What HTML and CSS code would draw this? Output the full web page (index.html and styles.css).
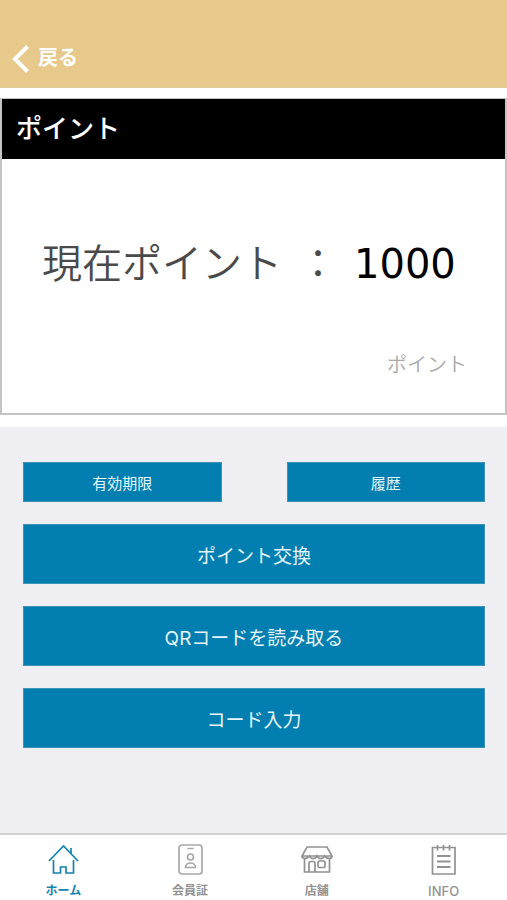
FILE: index.html
```html
<!DOCTYPE html>
<html lang="ja">
<head>
<meta charset="utf-8">
<meta name="viewport" content="width=device-width, initial-scale=1">
<title>ポイント</title>
<link rel="stylesheet" href="styles.css">
</head>
<body>
<header class="navbar">
  <a class="back" href="#">
    <svg class="back-icon" viewBox="0 0 18 30" aria-hidden="true"><path d="M15.500 2.500 3 15l12.500 12.500"/></svg>
    <span>戻る</span>
  </a>
</header>
<main class="content">
  <section class="summary">
    <div class="card">
      <h1 class="card-title">ポイント</h1>
      <div class="balance">
        <span class="balance-label">現在ポイント</span>
        <span class="balance-colon">：</span>
        <span class="balance-value">1000</span>
      </div>
      <p class="unit">ポイント</p>
    </div>
  </section>
  <section class="actions">
    <div class="action-pair">
      <button class="button button-small" type="button">有効期限</button>
      <button class="button button-small" type="button">履歴</button>
    </div>
    <button class="button" type="button">ポイント交換</button>
    <button class="button" type="button">QRコードを読み取る</button>
    <button class="button" type="button">コード入力</button>
  </section>
</main>
<nav class="tabs">
  <a class="tab tab-active" href="#" aria-current="page">
    <svg class="tab-icon" viewBox="0 0 32 32" aria-hidden="true"><path d="M2 17 16.500 2 31 17M6.500 16v13h7v-6h5.500v6H26.500V16M24 4v5.500"/></svg>
    <span>ホーム</span>
  </a>
  <a class="tab" href="#">
    <svg class="tab-icon tab-icon-soft" viewBox="0 0 32 32" aria-hidden="true"><rect x="5" y="1" width="23" height="29" rx="3"/><path d="M13.500 4.500h6M11.500 23.500c0-6 10-6 10 0z"/><circle cx="16.500" cy="13" r="3"/></svg>
    <span>会員証</span>
  </a>
  <a class="tab" href="#">
    <svg class="tab-icon" viewBox="0 0 32 32" aria-hidden="true"><path d="M6 3h20l5 9H1zM1 12c0 3 5 3.500 7.500 0 1.500 3.500 6 3.500 7.500 0 1.500 3.500 6 3.500 7.500 0 2.500 3.500 7.500 3 7.500 0M3.500 14.500v13.500h25V14.500M8 28v-8.500q0-2 2-2h2q2 0 2 2V28"/><rect x="17" y="17" width="7" height="6.500" rx="1.500"/></svg>
    <span>店舗</span>
  </a>
  <a class="tab" href="#">
    <svg class="tab-icon" viewBox="0 0 32 32" aria-hidden="true"><path d="M6.500 3.500h-2v26.500h22.500V3.500h-2M6.500 3.500h18.500M9.500 1v5.500M15.500 1v5.500M21.500 1v5.500"/><path class="pad" d="M9 12h13.500M9 17.500h13.500M9 23h13.500"/></svg>
    <span class="tab-latin">INFO</span>
  </a>
</nav>
</body>
</html>
```
FILE: styles.css
```css
* {
  box-sizing: border-box;
}

body {
  display: flex;
  flex-direction: column;
  min-height: 100vh;
  margin: 0;
  background: #efeff4;
  font-family: Inter, "Noto Sans CJK JP", sans-serif;
}

.navbar {
  padding: 41px 12px 11px;
  border-bottom: 1px solid #e0cb98;
  background: #e6c98b;
}

.back {
  display: flex;
  align-items: center;
  gap: 8px;
  width: max-content;
  color: #fff;
  font-size: 20px;
  font-weight: 700;
  line-height: 35px;
  text-decoration: none;
}

.back-icon {
  width: 18px;
  height: 30px;
  fill: none;
  stroke: #fff;
  stroke-width: 4;
}

.content {
  flex: 1;
}

.summary {
  padding: 10px 0 12px;
  background: #fff;
}

.card {
  border: solid #c4c4c4;
  border-width: 1px 2px 2px;
}

.card-title {
  margin: 0;
  padding: 0 14px;
  background: #000;
  color: #fff;
  font-size: 26px;
  font-weight: 500;
  line-height: 60px;
}

.balance {
  display: flex;
  align-items: baseline;
  padding: 72px 0 0 40px;
  font-size: 40px;
  line-height: 60px;
  white-space: nowrap;
}

.balance-label,
.balance-colon {
  color: #4a4a4a;
  font-family: "Noto Sans CJK JP", sans-serif;
  font-weight: 350;
}

.balance-colon {
  margin: 0 16px;
}

.balance-value {
  color: #000;
  font-family: "DejaVu Sans", sans-serif;
}

.unit {
  margin: 0;
  padding: 55px 38px 32px;
  color: #aaa;
  font-size: 20px;
  font-weight: 350;
  line-height: 32px;
  text-align: right;
}

.actions {
  display: flex;
  flex-direction: column;
  gap: 22px;
  padding: 35px 22px 22px 23px;
}

.action-pair {
  display: grid;
  grid-template-columns: 1fr 1fr;
  gap: 65px;
}

.button {
  width: 100%;
  height: 60px;
  padding: 0;
  border: 1px solid #3d94b4;
  border-radius: 0;
  background: #027fb0;
  color: #e4f5fc;
  font-family: inherit;
  font-size: 19px;
  font-weight: 400;
}

.button-small {
  height: 40px;
  font-size: 15px;
}

.tabs {
  display: grid;
  grid-template-columns: repeat(4, 1fr);
  border-top: 2px solid #d2d2d5;
  background: #fff;
}

.tab {
  display: flex;
  flex-direction: column;
  align-items: center;
  gap: 6px;
  padding: 9px 0 0;
  color: #929292;
  font-size: 12px;
  font-weight: 700;
  line-height: 18px;
  text-decoration: none;
}

.tab-active {
  color: #1583ae;
}

.tab-latin {
  font-size: 13px;
  font-weight: 500;
}

.tab-icon {
  width: 32px;
  height: 32px;
  fill: none;
  stroke: currentColor;
  stroke-width: 1.7;
}

.tab-icon-soft {
  stroke: #a8a8a8;
}

.pad {
  stroke-width: 2;
}
```
